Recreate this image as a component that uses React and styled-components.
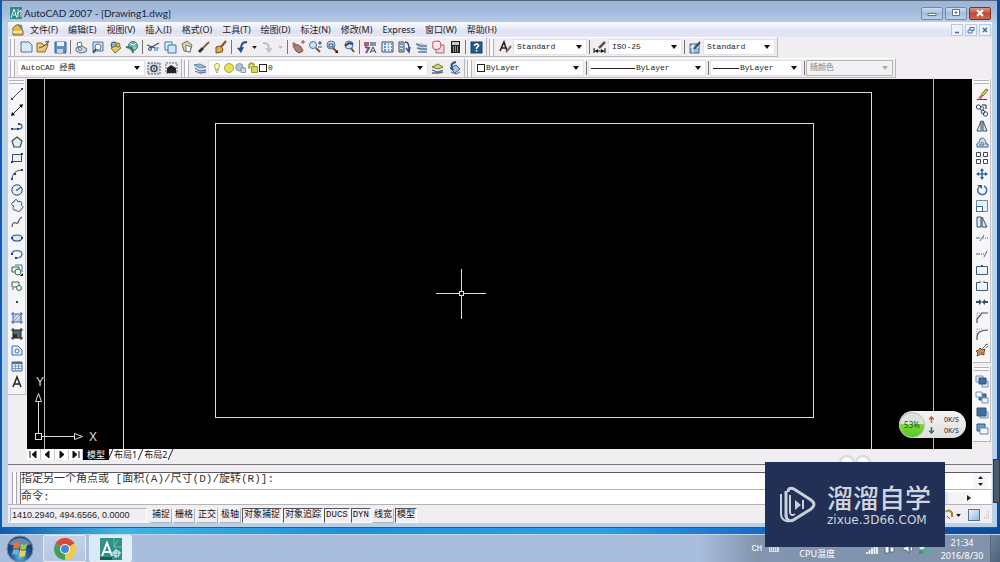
import React from 'react'
import styled, { createGlobalStyle } from 'styled-components'

const ink = '#3a4c66'
const blue = '#3f74ad'
const pale = '#cfe2f3'

// every icon is drawn on a 16 x 16 grid
const icons = {
  new: <path d="M3 3h8l3 3v7H3z" fill="#d9ebf8" stroke="#4d7396" />,
  open: <><path d="M2 4h5l1 2h5l-3 7H2z" fill="#e6c97a" stroke="#8a6d2c" /><path d="M4 9l5-2 4-4M10 3l4-1-2 4" fill="none" stroke="#6c5a34" /></>,
  save: <><path d="M3 3h11v11H3z" fill="#5d93c4" stroke="#3e6589" /><path d="M5 3h7v4H5z" fill="#e8f3fb" /><path d="M5 10h6v4H5z" fill="#c3d6e6" /></>,
  print: <><path d="M4 4l4-1 1 4-4 1z" fill="#fff" stroke="#667386" /><path d="M3 9l6-2 5 3-1 3-6 1-4-2z" fill="#cdd5de" stroke="#667386" /><circle cx="7" cy="10" r="1.500" fill="#fff" stroke="#667386" /></>,
  preview: <><path d="M3 3h10v9H3z" fill={pale} stroke={blue} /><circle cx="8" cy="8" r="3" fill="#fff" stroke="#5d7488" /><path d="M6 10l-3 4" stroke={ink} strokeWidth="2" /></>,
  publish: <><circle cx="7" cy="6" r="3" fill="#8bb2d8" stroke={ink} /><path d="M4 9l7-3 3 3-6 5z" fill="#e0cb5d" stroke="#7b6c2b" /><circle cx="11" cy="6" r="2" fill="#dfc35b" stroke="#77672c" /></>,
  web: <><circle cx="9" cy="7" r="4.500" fill="#6eb5bd" stroke="#3f7386" /><path d="M6 5l4 1 2-2M7 9h5" stroke="#d9f3e0" fill="none" /><path d="M2 8l6 1 1 5" fill="none" stroke="#3b7760" strokeWidth="2" /></>,
  cut: <><path d="M2 6l8 3M14 4L5 9" stroke={ink} strokeWidth="1.300" /><circle cx="5" cy="10" r="1.500" fill="none" stroke={ink} /><path d="M9 9h5M9 11h4" stroke={blue} /></>,
  copy: <><path d="M3 3h7v8H3z" fill="#e6f1fa" stroke={blue} /><path d="M6 6h8v8H6z" fill="#d3e5f4" stroke={blue} /></>,
  paste: <><path d="M3 5l5-3 5 4-2 7-6-1z" fill="#d9d4a7" stroke="#77744f" /><path d="M7 6l5 2-1 5-4-1z" fill="#fff" stroke="#777c80" /></>,
  match: <><path d="M3 13l4-4" stroke="#333" strokeWidth="3" /><path d="M7 9l6-6" stroke="#8a5b3f" strokeWidth="1.800" /></>,
  brush: <><path d="M3 8l4-1 3 3-1 3-6 1z" fill="#dcae4f" stroke="#74502b" /><path d="M8 8l5-6" stroke="#934b38" strokeWidth="2.200" /></>,
  undo: <><path d="M13 3C7 3 7 7 7 12" fill="none" stroke="#234c91" strokeWidth="2" /><path d="M3 9l4 5 3-6z" fill="#234c91" /></>,
  redo: <><path d="M3 4c6 0 6 3 6 8" fill="none" stroke="#bcbcc2" strokeWidth="2" /><path d="M5 9l4 5 4-5z" fill="#c4c4ca" /></>,
  pan: <><path d="M3 7c3-1 4-3 8 1l2 4-4 2-3-2z" fill="#b07f76" stroke="#6b4c4b" /><path d="M4 3v4M2 5h4M11 3h4M13 1v4" stroke="#a44450" /></>,
  zoomRt: <><circle cx="6" cy="6" r="3.500" fill={pale} stroke={blue} /><path d="M9 9l4 4" stroke="#7e4d36" strokeWidth="2" /><path d="M11 4h4M13 2v4M11 8h4" stroke={ink} /></>,
  zoomWin: <><circle cx="7" cy="6" r="4" fill={pale} stroke={blue} /><path d="M5 5h4v3H5z" fill="none" stroke={ink} /><path d="M9 9l4 4" stroke="#7e4d36" strokeWidth="2" /><path d="M11 14h3v-3z" fill="#111" /></>,
  zoomPrev: <><circle cx="8" cy="6" r="4" fill={pale} stroke={blue} /><path d="M10 9l3 4" stroke="#7e4d36" strokeWidth="2" /><path d="M4 7l4-3 4 1" fill="none" stroke="#1f3d70" strokeWidth="2" /></>,
  props: <><path d="M2 3h5v4H2z" fill="#b35c78" /><path d="M8 3h6v4H8z" fill="#7f8fb5" /><path d="M3 8l4 1-3 5" fill="none" stroke="#6a5287" strokeWidth="2" /><path d="M8 14l3-6 3 6M9 12h4" fill="none" stroke={ink} /></>,
  design: <><path d="M3 3h11v10H3z" fill="#e5eff7" stroke={ink} /><path d="M5 5h2M5 8h2M5 11h2M9 5h1M9 8h1M9 11h1M12 5h1M12 8h1M12 11h1" stroke={blue} strokeWidth="1.500" /></>,
  palettes: <><path d="M3 3h5v10H3z" fill={pale} stroke={ink} /><path d="M4 5h3M4 8h3M4 11h3" stroke={ink} /><path d="M9 3c4 0 4 4 4 9M10 9l3 4 1-5" fill="none" stroke="#2c5486" strokeWidth="1.500" /></>,
  sheets: <><path d="M3 4h6l5 2v7H8z" fill="#c6d3df" /><path d="M3 5l5 2h6M4 9l4 1h6M5 13h9" stroke="#58809f" fill="none" strokeWidth="1.600" /></>,
  markup: <><path d="M6 6h8v8H6z" fill="#edd8df" stroke="#9d6c7c" /><path d="M3 3c2-1 2 0 3-1 1 1 3-1 4 1 1 1 0 2 1 3-1 2 0 3-2 4-1 0-2 1-3 0-2 1-3 0-3-2-1-1 0-2 0-3-1-1-1-1 0-2z" fill="#fae6eb" stroke="#c33d59" /></>,
  calc: <><path d="M4 2h9v12H4z" fill="#222" /><path d="M5 3h7v3H5z" fill="#c9c9bd" /><path d="M6 8h1M8 8h1M10 8h1M6 10h1M8 10h1M10 10h1M6 12h1M8 12h1M10 12h1" stroke="#fff" /></>,
  help: <><rect x="3" y="3" width="11" height="11" fill="#1d5a92" stroke="#164067" /><path d="M6.500 7c0-3 5-2 4 0-1 1-2 1-2 3M8.500 11v1.500" stroke="#fff" fill="none" strokeWidth="1.600" /></>,
  textStyle: <><path d="M3 12l4-9 3 9M4 9h5" fill="none" stroke="#222" strokeWidth="1.600" /><path d="M9 13l5-6" stroke="#7e625c" strokeWidth="2" /></>,
  dimStyle: <><path d="M2 9v5M13 9v5M2 12h11" stroke="#111" /><path d="M3 12l3-2v4zM12 12l-3-2v4z" fill="#111" /><path d="M7 9l6-6" stroke="#555" strokeWidth="2.500" /></>,
  tableStyle: <><path d="M3 5h9v9H3z" fill="#9dbfdc" stroke="#355f8e" /><path d="M3 8h9M6 5v9" stroke="#edf5fb" /><path d="M7 10l6-7" stroke="#3d4e60" strokeWidth="2" /></>,
  gear: <><path d="M2 3h12v11H2z" fill="#d6dbe2" stroke="#4b5668" strokeDasharray="2 1" /><circle cx="8" cy="8.500" r="3" fill="none" stroke={ink} strokeWidth="1.500" /><circle cx="8" cy="8.500" r="1" fill={ink} /></>,
  home: <><path d="M3 3h11v10H3z" fill="none" stroke="#5d6570" strokeDasharray="2 1" /><path d="M4 8l4-3 5 3v5H4z" fill="#222" /></>,
  layers: <><path d="M2 5l6-1 6 3-6 1z" fill="#9fbcd9" stroke="#5d81a8" /><path d="M3 8l5 3 6-1M3 11l5 2 6-1" fill="none" stroke="#5d81a8" strokeWidth="1.300" /></>,
  layerCur: <><path d="M3 7l6-3 5 3-5 2z" fill="#d8d66d" stroke="#6d7636" /><path d="M3 10l6 2 5-2M3 13l6 0 5-1" fill="none" stroke="#4f7183" strokeWidth="1.300" /></>,
  layerPrev: <><path d="M4 8l6-3 4 4-5 4z" fill="#a5c4df" stroke="#3e638c" /><path d="M10 2C4 3 5 7 7 10" fill="none" stroke="#2b5488" strokeWidth="2" /><path d="M5 12l5 2 4-2" stroke="#3e638c" fill="none" /></>,
  bulb: <><path d="M8 2c-4 0-4 4-2 6v2h4V8c2-2 2-6-2-6z" fill="#fbf7a5" stroke="#8c8a45" /><path d="M6 12h4M7 14h2" stroke="#666" /></>,
  sun: <circle cx="8" cy="8" r="6" fill="#e7e34d" stroke="#8d8b2d" />,
  freeze: <><circle cx="6" cy="7" r="5" fill="#b6c5d3" stroke="#6a7d92" /><path d="M8 8h6v6H8z" fill="#d6dde4" stroke="#6a7d92" /></>,
  lock: <><path d="M3 9V4c1-3 6-3 6 1" fill="none" stroke="#a9a738" strokeWidth="3" /><path d="M6 6h8v8H6z" fill="#d9d84b" stroke="#7d7b28" /></>,
  line: <><path d="M3 13L13 3" stroke={ink} /><path d="M2 12h2v2H2zM12 2h2v2h-2z" fill="#24436e" /></>,
  xline: <><path d="M3 13L13 3" stroke="#222" /><path d="M2 14l1-4 3 3zM14 2l-1 4-3-3z" fill="#111" /></>,
  pline: <><path d="M3 11h7c4 0 4-5 0-5" fill="none" stroke={blue} strokeWidth="1.300" /><path d="M2 10h2v2H2zM8 10h2v2H8zM9 5h2v2H9z" fill="#24436e" /></>,
  polygon: <path d="M8 3l5 4-2 6H5L3 7z" fill="#e3edf3" stroke="#3d4850" strokeWidth="1.200" />,
  rect: <><path d="M3.500 4.500h9v7h-9z" fill="#e8f1f8" stroke={ink} /><path d="M2 11h2v2H2zM12 3h2v2h-2z" fill="#24436e" /></>,
  arc: <><path d="M3 13c0-5 4-9 10-9" fill="none" stroke={ink} /><path d="M2 12h2v2H2zM5 7h2v2H5zM12 3h2v2h-2z" fill="#24436e" /></>,
  circle: <><circle cx="8" cy="8" r="5.200" fill="#e0eff9" stroke="#2e4664" /><path d="M8 8l4-3M7 8h2" stroke={blue} strokeWidth="1.500" /></>,
  revcloud: <path d="M5 8c-3 0-3-4 0-4 0-3 4-3 4 0 3-2 5 1 3 3 3 1 2 4 0 4 0 3-4 3-5 1-3 1-4-2-2-4z" fill="#eef5fa" stroke={ink} />,
  spline: <path d="M3 13c0-4 2-5 4-4 3 2 2-5 6-6" fill="none" stroke="#5c5360" strokeWidth="1.200" />,
  ellipse: <><ellipse cx="8" cy="8" rx="5" ry="3" fill="#d8eaf7" stroke="#244d7b" strokeWidth="1.200" /><path d="M2 7h2v2H2zM12 7h2v2h-2z" fill="#24436e" /></>,
  ellipseArc: <><path d="M3 8c0-5 10-4 10 0 0 3-3 4-6 4" fill="none" stroke={blue} strokeWidth="1.300" /><path d="M2 7h2v2H2zM6 11h2v2H6z" fill="#24436e" /></>,
  insert: <><path d="M6 3h7v7" fill="none" stroke={blue} /><path d="M3 5h7v5H3z" fill="#e5f1de" stroke="#356653" /><circle cx="9" cy="10" r="3" fill="#eff8e8" stroke="#356653" /><path d="M11 14h3v-3z" fill="#111" /></>,
  block: <><path d="M3 4h7v5H3z" fill="#eff6e9" stroke="#356653" /><circle cx="10" cy="10" r="2.500" fill="#f4faf0" stroke="#356653" /><path d="M4 10v2" stroke="#356653" /></>,
  point: <path d="M7 7h2v2H7z" fill="#24436e" />,
  hatch: <><path d="M4 4h9v8H4z" fill="#c7dcec" /><path d="M4 12l8-8M4 8l4-4M8 12l5-5" stroke="#86a8c4" /><path d="M4 2v12M12 2v12M2 4h12M2 12h12" stroke="#43678f" fill="none" /></>,
  gradient: <><path d="M4 4h8v8H4z" fill="#596672" /><path d="M4 8h4v4H4z" fill="#27313a" /><path d="M4 2v12M12 2v12M2 4h12M2 12h12" stroke="#222" fill="none" /></>,
  region: <><path d="M3 4h6l4 4v5H3z" fill="#dfedf8" stroke="#3e75aa" /><circle cx="8" cy="9" r="2" fill="#fff" stroke="#3e75aa" /></>,
  table: <><path d="M3 4h10v9H3z" fill="#eef5fb" stroke="#41699b" /><path d="M3 5h10" stroke="#41699b" strokeWidth="2" /><path d="M3 8h10M3 10.500h10M6.500 5v8M9.500 5v8" stroke="#7c9dc2" /></>,
  mtext: <path d="M4 13l4-10 4 10M5 10h6" fill="none" stroke="#222" strokeWidth="1.500" />,
  erase: <><path d="M7 9l5-6 2 1-5 6z" fill="#e0d35e" stroke="#736b30" /><path d="M4 12l3-3 2 1-2 3z" fill="#cc6675" /><path d="M3 13.500h10" stroke="#444" /></>,
  copyObj: <><circle cx="4.500" cy="5" r="2.200" fill="none" stroke={ink} /><circle cx="8" cy="6.500" r="1.800" fill="none" stroke={ink} /><circle cx="11.500" cy="12" r="2.200" fill="none" stroke={ink} /><circle cx="9" cy="10" r="1.800" fill="none" stroke={ink} /><path d="M8 3h4v4" fill="none" stroke="#222" /></>,
  mirror: <><path d="M7 3v10H3zM9 3v10h4z" fill="#e4eef6" stroke={ink} /><path d="M8 2v12" stroke="#6d8296" /></>,
  offset: <><path d="M3 13h11v-3h-2c0-3-2-8-6-5-1 2 0 4-3 5z" fill="#cde0ef" stroke="#38658b" /><path d="M5 11h5c0-3-3-4-3-1" fill="none" stroke="#38658b" /></>,
  array: <path d="M2.500 2.500h4v4h-4zM9.500 2.500h4v4h-4zM2.500 9.500h4v4h-4zM9.500 9.500h4v4h-4z" fill="#fff" stroke="#3f4650" />,
  move: <><path d="M8 4v8M4 8h8" stroke={blue} strokeWidth="1.600" /><path d="M8 2l2 3H6zM8 14l2-3H6zM2 8l3-2v4zM14 8l-3-2v4z" fill="#2d5d94" /></>,
  rotate: <><path d="M5 5a4.500 4.500 0 1 0 5-1" fill="none" stroke="#3f6d9c" strokeWidth="1.500" /><path d="M3 3h5v4z" fill="#2d5d94" /></>,
  scale: <><path d="M2.500 2.500h11v11h-11z" fill="#e7f0f7" stroke="#6c89a5" /><path d="M2.500 8.500h6v5h-6z" fill="#fff" stroke="#3e658c" /></>,
  stretch: <><path d="M3 3h4v10H3z" fill="#e1ebf3" stroke={ink} /><path d="M8 3l5 10H8z" fill="#d3e2ee" stroke={ink} /></>,
  trim: <path d="M2 8h4M9 8h1M11 8h1M13 8h1M6 11l4-6" stroke="#4c6674" />,
  extend: <path d="M2 8h4M7 8h1M9 8h1M10 11l3-6" stroke="#4c6674" />,
  breakPt: <><path d="M2.500 4.500h11v8h-11z" fill="#edf3f8" stroke="#42566c" /><path d="M7 3h2v2H7z" fill="#42566c" /></>,
  break: <path d="M6 4.500H2.500v8h11v-8H10M6 3v2M10 3v2" fill="#edf3f8" stroke="#42566c" />,
  join: <path d="M2 7h3V5l3 3-3 3V9H2zM14 7h-3V5L8 8l3 3V9h3z" fill="#2e4d62" />,
  chamfer: <><path d="M3 13V9l5-6h6" fill="none" stroke="#3b5366" strokeWidth="1.200" /><path d="M3 3h5M3 3v6" stroke="#7fa1bd" strokeDasharray="1 1" /></>,
  fillet: <><path d="M3 14v-3c0-5 4-7 11-7" fill="none" stroke="#3b5366" strokeWidth="1.200" /><path d="M3 3h6M3 3v6" stroke="#7fa1bd" strokeDasharray="1 1" /></>,
  explode: <><path d="M2 9l3-1 1-2 2 2 3-1-1 3 0 3-3-1-4 2 1-3z" fill="#e0a950" stroke="#7b412a" /><path d="M4 10h4v2" fill="none" stroke="#c2502f" /><path d="M8 7l4-4M12 6l2-2M11 3l3-1" stroke="#5b6a86" /></>,
  front: <><path d="M2 3h7v6H2zM8 8h6v6H8z" fill="#e1edf7" stroke="#6f94ba" /><path d="M5 5h7v6H5z" fill="#3f6f9f" stroke="#2c557f" /></>,
  back: <><path d="M5 5h7v6H5z" fill="#4a79a9" stroke="#2c557f" /><path d="M2 3h6v5H2zM8 9h6v5H8z" fill="#eff5fa" stroke="#6f94ba" /></>,
  above: <><path d="M6 7h8v6H6z" fill="#dce9f5" stroke="#6f94ba" /><path d="M3 3h9v8H3z" fill="#3f6f9f" stroke="#2c557f" /></>,
  under: <><path d="M3 3h8v7H3z" fill="#6b9bcb" stroke="#2c557f" /><path d="M6 7h8v6H6z" fill="#f0f6fb" stroke="#5d86af" /></>,
}

const Icon = ({ name, size = 16 }) => (
  <svg width={size} height={size} viewBox="0 0 16 16" aria-hidden="true">{icons[name]}</svg>
)

const Tool = ({ name, tall }) => (
  <ToolButton type="button" aria-label={name} $tall={tall}><Icon name={name} /></ToolButton>
)

const Tools = ({ names, tall }) => names.map((name) => <Tool key={name} name={name} tall={tall} />)

const Arrow = ({ color = '#111' }) => (
  <svg width="6" height="4" viewBox="0 0 6 4" aria-hidden="true"><path d="M0 0h6L3 4z" fill={color} /></svg>
)

const Combo = ({ label, value, width, disabled, children }) => (
  <ComboFrame $width={width} $disabled={disabled}>
    {children}
    <ComboSelect aria-label={label} defaultValue={value} disabled={disabled}>
      <option>{value}</option>
    </ComboSelect>
    <Arrow color={disabled ? '#aaa' : '#111'} />
  </ComboFrame>
)

const menus = ['文件(F)', '编辑(E)', '视图(V)', '插入(I)', '格式(O)', '工具(T)', '绘图(D)', '标注(N)', '修改(M)', 'Express', '窗口(W)', '帮助(H)']
const drawTools = ['line', 'xline', 'pline', 'polygon', 'rect', 'arc', 'circle', 'revcloud', 'spline', 'ellipse', 'ellipseArc', 'insert', 'block', 'point', 'hatch', 'gradient', 'region', 'table', 'mtext']
const modifyTools = ['erase', 'copyObj', 'mirror', 'offset', 'array', 'move', 'rotate', 'scale', 'stretch', 'trim', 'extend', 'breakPt', 'break', 'join', 'chamfer', 'fillet', 'explode']
const modes = [
  ['捕捉', false], ['栅格', false], ['正交', false], ['极轴', false], ['对象捕捉', true],
  ['对象追踪', true], ['DUCS', true], ['DYN', true], ['线宽', false], ['模型', true],
]

const TitleBar = () => (
  <Title>
    <svg width="12" height="12" viewBox="0 0 12 12" aria-hidden="true">
      <path d="M0 0h12v12H0z" fill="#2f8a80" /><path d="M1 11l3-9 3 9M3 8h3M8 2v8M7 7l4-4v7" fill="none" stroke="#e6f5ef" />
    </svg>
    <TitleText>AutoCAD 2007 - [Drawing1.dwg]</TitleText>
    <CaptionButton type="button" aria-label="Minimize"><svg width="10" height="8"><path d="M1 4.500h8v2H1z" fill="#fff" stroke="#5b7390" /></svg></CaptionButton>
    <CaptionButton type="button" aria-label="Restore"><svg width="10" height="8"><path d="M1.500.5h7v6h-7z" fill="#fff" stroke="#5b7390" /><path d="M4 3h2v1H4z" fill="#5b7390" stroke="#5b7390" /></svg></CaptionButton>
    <CaptionButton type="button" aria-label="Close" $close><svg width="10" height="8"><path d="M2 1l6 6M8 1L2 7" stroke="#fff" strokeWidth="2" /></svg></CaptionButton>
  </Title>
)

const MenuBar = () => (
  <Menu>
    <svg width="12" height="12" viewBox="0 0 12 12" aria-hidden="true">
      <path d="M1 4l3-3h3l4 6v4H1z" fill="#e3bd43" stroke="#80672c" /><path d="M5 0l5 1 1 6z" fill="#5b83b3" /><path d="M1 8h9" stroke="#f7e9a2" strokeWidth="2" />
    </svg>
    <MenuItems>{menus.map((m) => <MenuButton key={m} type="button">{m}</MenuButton>)}</MenuItems>
    <ChildButton type="button" aria-label="Minimize drawing"><svg width="8" height="8"><path d="M2 6.500h4" stroke="#466c9c" strokeWidth="1.500" /></svg></ChildButton>
    <ChildButton type="button" aria-label="Restore drawing"><svg width="8" height="8"><path d="M1 4h4v3H1zM3 4V1.500h4v3H5" fill="none" stroke="#466c9c" /></svg></ChildButton>
    <ChildButton type="button" aria-label="Close drawing"><svg width="8" height="8"><path d="M2 2l4 4M6 2L2 6" stroke="#466c9c" strokeWidth="1.500" /></svg></ChildButton>
  </Menu>
)

const StandardBar = () => (
  <ToolRow>
    <Toolbar>
      <Grip />
      <Tools names={['new', 'open', 'save']} /><Separator />
      <Tools names={['print', 'preview', 'publish', 'web']} /><Separator />
      <Tools names={['cut', 'copy', 'paste', 'match', 'brush']} /><Separator />
      <Tool name="undo" /><DropButton type="button" aria-label="Undo list"><Arrow /></DropButton>
      <Tool name="redo" /><DropButton type="button" aria-label="Redo list"><Arrow color="#bbb" /></DropButton><Separator />
      <Tools names={['pan', 'zoomRt', 'zoomWin', 'zoomPrev']} /><Separator />
      <Tools names={['props', 'design', 'palettes', 'sheets', 'markup', 'calc']} /><Separator />
      <Tool name="help" />
    </Toolbar>
    <Toolbar>
      <Grip />
      <Tool name="textStyle" /><Combo label="Text style" value="Standard" width={74} /><Separator />
      <Tool name="dimStyle" /><Combo label="Dimension style" value="ISO-25" width={74} /><Separator />
      <Tool name="tableStyle" /><Combo label="Table style" value="Standard" width={72} />
    </Toolbar>
  </ToolRow>
)

const LayerBar = () => (
  <ToolRow>
    <Toolbar>
      <Grip />
      <Combo label="Workspace" value="AutoCAD 经典" width={128} />
      <Tools names={['gear', 'home']} />
    </Toolbar>
    <Toolbar>
      <Grip />
      <Tool name="layers" />
      <Combo label="Layer" value="0" width={220}>
        {['bulb', 'sun', 'freeze', 'lock'].map((n) => <Icon key={n} name={n} size={12} />)}
        <Swatch />
      </Combo>
      <Tools names={['layerCur', 'layerPrev']} />
    </Toolbar>
    <Toolbar>
      <Grip />
      <Combo label="Color" value="ByLayer" width={110}><Swatch /></Combo><Separator />
      <Combo label="Linetype" value="ByLayer" width={118}><LineSample $width={44} /></Combo><Separator />
      <Combo label="Lineweight" value="ByLayer" width={92}><LineSample $width={26} /></Combo><Separator />
      <Combo label="Plot style" value="随颜色" width={87} disabled />
    </Toolbar>
  </ToolRow>
)

const Drawing = () => (
  <DrawingSvg viewBox="0 0 945 370" preserveAspectRatio="xMidYMid meet">
    <g fill="none" stroke="#dcdcdc" shapeRendering="crispEdges">
      <path d="M17.500 0v370M906.500 0v370" stroke="#bdbdbd" />
      <path d="M96.500 370V13.500h748V370" />
      <path d="M188.500 44.500h598v294h-598z" />
      <path d="M434.500 190v22M434.500 217v23M409 214.500h23M437 214.500h22" />
      <path d="M432.500 212.500h4v4h-4z" />
      <path d="M8.500 354.500h6v6h-6zM11.500 354v-32M15 357.500h33" />
    </g>
    <path d="M8.500 322.500h6l-3-8zM47.500 354.500v6l8-3z" fill="none" stroke="#dcdcdc" />
    <text x="9" y="307" fill="#dcdcdc" fontFamily="Liberation Sans, sans-serif" fontSize="12">Y</text>
    <text x="62" y="362" fill="#dcdcdc" fontFamily="Liberation Sans, sans-serif" fontSize="12">X</text>
  </DrawingSvg>
)

const SpeedBall = () => (
  <SpeedWidget>
    <SpeedPercent>53%</SpeedPercent>
    <SpeedLines>
      <SpeedLine><svg width="5" height="7"><path d="M2.500 7V2M0 3.500L2.500 1 5 3.500" fill="none" stroke="#d8572a" strokeWidth="1.500" /></svg>0K/S</SpeedLine>
      <SpeedLine><svg width="5" height="7"><path d="M2.500 0v5M0 3.500L2.500 6 5 3.500" fill="none" stroke="#2e7a34" strokeWidth="1.500" /></svg>0K/S</SpeedLine>
    </SpeedLines>
  </SpeedWidget>
)

const LayoutTabs = () => (
  <TabRow>
    {['M3 2v7M9 2L5 5.500 9 9z', 'M8 2L4 5.500 8 9z', 'M5 2l4 3.500L5 9z', 'M4 2l4 3.500L4 9zM10 2v7'].map((d) => (
      <TabNav key={d} type="button" aria-label="Scroll tabs"><svg width="13" height="11"><path d={d} fill="#111" stroke="#111" /></svg></TabNav>
    ))}
    <Tab type="button" $active>模型</Tab>
    <Slash />
    <Tab type="button">布局1</Tab>
    <Slash />
    <Tab type="button">布局2</Tab>
    <Slash />
  </TabRow>
)

const CommandLine = () => (
  <CommandDock>
    <DockGrip />
    <CommandBox>
      <HistoryRow>
        <HistoryText>指定另一个角点或 [面积(A)/尺寸(D)/旋转(R)]:</HistoryText>
        <Spinner type="button" aria-label="Scroll history"><svg width="7" height="12"><path d="M1 4l2.500-3L6 4zM1 8l2.500 3L6 8z" fill="#222" /></svg></Spinner>
      </HistoryRow>
      <PromptRow>
        <label htmlFor="cmd">命令:</label>
        <PromptInput id="cmd" type="text" />
        <PromptScroll type="button" aria-label="Scroll right"><svg width="4" height="6"><path d="M0 0l4 3-4 3z" fill="#222" /></svg></PromptScroll>
      </PromptRow>
    </CommandBox>
  </CommandDock>
)

const StatusBar = () => (
  <Status>
    <Coords>1410.2940, 494.6566, 0.0000</Coords>
    <Modes>{modes.map(([text, on]) => <ModeButton key={text} type="button" aria-pressed={on} $on={on}>{text}</ModeButton>)}</Modes>
    <svg width="9" height="12" viewBox="0 0 9 12" aria-hidden="true"><path d="M1 3c2-3 5-1 6 1v4" fill="none" stroke="#a8862c" strokeWidth="2" /><path d="M2 7l3 3" stroke="#555" /></svg>
    <DropButton type="button" aria-label="Status menu"><Arrow /></DropButton>
    <CleanButton type="button" aria-label="Clean screen" />
    <svg width="8" height="8" aria-hidden="true"><path d="M6 1h1M4 4h1M6 4h1M2 7h1M4 7h1M6 7h1" stroke="#a5a5ad" /></svg>
  </Status>
)

const Watermark = () => (
  <WatermarkBox>
    <svg width="36" height="38" viewBox="0 0 36 38" aria-hidden="true">
      <path d="M8 6c0-3 2-5 6-3l17 11c4 3 4 6 0 9L15 33c-4 3-9 2-9-4" fill="none" stroke="#c9ced9" strokeWidth="3" />
      <path d="M1 8v20c0 5 4 8 9 7" fill="none" stroke="#c9ced9" strokeWidth="2" />
      <path d="M6 5v25" stroke="#c9ced9" strokeWidth="3" />
      <path d="M10 9v17c0 3 2 4 5 2" fill="none" stroke="#c9ced9" strokeWidth="2" />
      <path d="M15 14l6 5-6 5zM22 14h2v9h-2z" fill="#c9ced9" />
    </svg>
    <div>
      <WatermarkName>溜溜自学</WatermarkName>
      <WatermarkSite>zixue.3D66.COM</WatermarkSite>
    </div>
  </WatermarkBox>
)

const Taskbar = () => (
  <TaskbarRow>
    <StartButton type="button" aria-label="Start">
      <svg width="28" height="28" viewBox="0 0 28 28">
        <defs><radialGradient id="orb" cx="50%" cy="80%"><stop offset="0" stopColor="#5fc3e8" /><stop offset=".6" stopColor="#285f92" /><stop offset="1" stopColor="#1d4370" /></radialGradient></defs>
        <circle cx="14" cy="14" r="13" fill="url(#orb)" stroke="#6f8fb5" />
        <path d="M3 9c5-8 17-8 22 0-6 3-16 3-22 0z" fill="#b8cfe3" opacity=".5" />
        <path d="M8 8c2-1 4-1 6 0l-1 6c-2-1-4-1-6 0z" fill="#e8703a" />
        <path d="M15 9c2 1 4 1 6 0l-1 5c-2 1-4 1-6 0z" fill="#9bcc52" />
        <path d="M7 15c2-1 4-1 6 0l-1 5c-2-1-4-1-6 0z" fill="#63b3e8" />
        <path d="M14 15c2 1 4 1 6 0l-1 6c-2 1-4 1-6 0z" fill="#f4cf50" />
      </svg>
    </StartButton>
    <TaskButton type="button" aria-label="Chrome">
      <svg width="22" height="22" viewBox="0 0 22 22">
        <path d="M11 11L1.500 5.500A11 11 0 0 1 20.500 5.500z" fill="#d8473a" />
        <path d="M11 11L20.500 5.500A11 11 0 0 1 11 22z" fill="#f2cb43" />
        <path d="M11 11v11A11 11 0 0 1 1.500 5.500z" fill="#3fa158" />
        <circle cx="11" cy="11" r="5" fill="#fff" /><circle cx="11" cy="11" r="4" fill="#4a86d8" />
      </svg>
    </TaskButton>
    <TaskButton type="button" aria-label="AutoCAD" $active>
      <svg width="22" height="22" viewBox="0 0 22 22">
        <path d="M0 0h22v22H0z" fill="#2f9288" /><path d="M14 0v9M18 2l-4 7h8" fill="none" stroke="#6fbcb0" />
        <path d="M2 18L7 5l5 13M4 14h6" fill="none" stroke="#fff" strokeWidth="2" /><path d="M12 15h9M16 11v9M14 13h5v5h-5z" fill="none" stroke="#e8f7f3" />
        <path d="M0 19h12v3H0z" fill="#1b5d5b" />
      </svg>
    </TaskButton>
    <Tray>
      <TrayLang>CH</TrayLang>
      <svg width="10" height="8" aria-hidden="true"><path d="M0 1h10v6H0z" fill="#d6dde5" /><path d="M1 3h8M1 5h8" stroke="#6d7b8d" strokeDasharray="1 1" /></svg>
      <TrayLabel>CPU温度</TrayLabel>
      <TrayIcons>
        <svg width="80" height="12" viewBox="0 0 80 12" aria-hidden="true">
          <path d="M0 4h6L3 1z" fill="#fff" />
          <path d="M17 9v2M19.500 7v4M22 5v6M24.500 3v8M27 1v10" stroke="#fff" strokeWidth="1.600" />
          <path d="M35 2h4v8h-4zM40 4h4v5h-4z" fill="#fff" stroke="#5c6b7d" />
          <path d="M53 4h3l3-3v9l-3-3h-3zM61 3c2 2 2 4 0 6" fill="#fff" stroke="#5c6b7d" />
          <circle cx="72" cy="4" r="2.500" fill="#dfe9ee" /><path d="M69 7h6v4h-6z" fill="#4b8e79" /><circle cx="76" cy="8" r="2.500" fill="none" stroke="#4fb795" strokeWidth="1.500" />
        </svg>
      </TrayIcons>
      <Clock><span>21:34</span><span>2016/8/30</span></Clock>
      <ShowDesktop type="button" aria-label="Show desktop" />
    </Tray>
  </TaskbarRow>
)

const App = () => (
  <Desktop>
    <GlobalStyle />
    <Backdrop>
      <AppWindow>
        <TitleBar />
        <Client>
          <MenuBar />
          <StandardBar />
          <LayerBar />
          <Workspace>
            <SideColumn>
              <SideBar><SideGrip /><Tools names={drawTools} tall /></SideBar>
            </SideColumn>
            <Viewport>
              <Canvas><Drawing /><SpeedBall /></Canvas>
              <LayoutTabs />
            </Viewport>
            <SideColumn>
              <SideBar><SideGrip /><Tools names={modifyTools} tall /></SideBar>
              <SideBar><SideGrip /><Tools names={['front', 'back', 'above', 'under']} tall /></SideBar>
            </SideColumn>
          </Workspace>
          <CommandLine />
          <StatusBar />
        </Client>
      </AppWindow>
    </Backdrop>
    <Taskbar />
    <EdgeHandle />
    <Rings width="36" height="16" aria-hidden="true"><circle cx="9" cy="9" r="7" fill="#fafafa" stroke="#d3dad8" strokeWidth="2" /><circle cx="25" cy="9" r="7" fill="#fafafa" stroke="#d3dad8" strokeWidth="2" /></Rings>
    <Watermark />
  </Desktop>
)

const GlobalStyle = createGlobalStyle`
  * {
    box-sizing: border-box;
  }
  body {
    margin: 0;
    overflow: hidden;
    font-family: 'Noto Sans', 'Noto Sans CJK SC', sans-serif;
    font-size: 9px;
    color: #222;
  }
  button, select, input {
    margin: 0;
    padding: 0;
    border: 0;
    border-radius: 0;
    background: none;
    font: inherit;
    color: inherit;
  }
  svg {
    display: block;
    flex: none;
  }
`

const Desktop = styled.div`
  position: relative;
  display: flex;
  flex-direction: column;
  height: 100vh;
`

const Backdrop = styled.div`
  display: flex;
  flex: 1;
  min-height: 0;
  padding: 0 3px 6px 2px;
  background: linear-gradient(90deg, #0d5bb0, #3fb4e6 12%, #1f8fdc 35%, #2aa0ea 60%, #0f5fc0 80%, #0a4a9a);
`

const AppWindow = styled.div`
  display: flex;
  flex: 1;
  flex-direction: column;
  min-width: 0;
  padding: 0 5px 4px 6px;
  border-top: 1px solid #56677c;
  border-bottom: 1px solid #33597f;
  background: #bad0e9;
`

const Title = styled.header`
  display: flex;
  align-items: center;
  flex: none;
  gap: 2px;
  height: 21px;
  margin: 0 -5px 0 -6px;
  padding: 3px 6px 0 8px;
  background: linear-gradient(#9fb5d4, #a3bbdc 50%, #b5cbe6);
`

const TitleText = styled.span`
  flex: 1;
  font-family: Lato, sans-serif;
  font-size: 10px;
  line-height: 14px;
  color: #1b2430;
`

const CaptionButton = styled.button`
  display: flex;
  align-items: center;
  justify-content: center;
  width: 22px;
  height: 13px;
  border: 1px solid ${(props) => (props.$close ? '#74332f' : '#7089a8')};
  border-radius: 2px;
  background: ${(props) => (props.$close ? 'linear-gradient(#dd9684, #c04a34 50%, #cf6a4c)' : 'linear-gradient(#cbdcf0, #a6bedc 50%, #bdd2ea)')};
`

const Client = styled.div`
  display: flex;
  flex: 1;
  flex-direction: column;
  min-height: 0;
  background: #f0eef1;
`

const Menu = styled.nav`
  display: flex;
  align-items: center;
  flex: none;
  gap: 2px;
  height: 15px;
  padding: 0 1px 0 4px;
  background: linear-gradient(#fafbfe, #dfe2f3 60%, #e4e6f5);
`

const MenuItems = styled.div`
  display: flex;
  flex: 1;
  gap: 10px;
  padding-left: 4px;
`

const MenuButton = styled.button`
  line-height: 14px;
  color: #1d1d26;
`

const ChildButton = styled.button`
  display: flex;
  align-items: center;
  justify-content: center;
  width: 12px;
  height: 12px;
  border: 1px solid #b9c9de;
  background: #eef3fb;
`

const ToolRow = styled.div`
  display: flex;
  flex: none;
  height: 21px;
`

const Toolbar = styled.div`
  display: flex;
  align-items: center;
  height: 20px;
  padding-right: 2px;
  border-right: 1px solid #b9b7bc;
  border-bottom: 1px solid #b9b7bc;
  border-top: 1px solid #fff;
`

const Grip = styled.span`
  width: 5px;
  height: 17px;
  margin: 0 2px;
  border: solid #b4b2b8;
  border-width: 0 1px;
  background: #fafafa;
`

const Separator = styled.span`
  width: 1px;
  height: 14px;
  margin: 0 1px 0 2px;
  background: #77757c;
`

const ToolButton = styled.button`
  display: flex;
  align-items: center;
  justify-content: center;
  flex: none;
  width: 17px;
  height: ${(props) => (props.$tall ? 16 : 17)}px;
`

const DropButton = styled.button`
  display: flex;
  align-items: center;
  justify-content: center;
  width: 9px;
  height: 17px;

  svg {
    width: 5px;
    height: 3px;
  }
`

const ComboFrame = styled.div`
  display: flex;
  align-items: center;
  width: ${(props) => props.$width}px;
  height: 16px;
  padding: 0 4px 0 2px;
  border: 1px solid ${(props) => (props.$disabled ? '#b5b5b8' : '#e2e2e6')};
  background: ${(props) => (props.$disabled ? '#f2f1f3' : '#fff')};
  color: ${(props) => (props.$disabled ? '#85858a' : '#1a1a1a')};
`

const ComboSelect = styled.select`
  flex: 1;
  min-width: 0;
  padding-left: 1px;
  appearance: none;
  outline: none;
  font-family: 'Liberation Mono', 'Noto Sans CJK SC', monospace;
  font-size: 8px;
  line-height: 12px;
  opacity: 1;
`

const Swatch = styled.span`
  width: 8px;
  height: 8px;
  border: 1px solid #222;
  background: #fff;
`

const LineSample = styled.span`
  width: ${(props) => props.$width}px;
  height: 1px;
  background: #222;
`

const Workspace = styled.main`
  display: flex;
  flex: 1;
  min-height: 0;
  padding-bottom: 4px;
  border-bottom: 1px solid #77757a;
`

const SideColumn = styled.div`
  display: flex;
  flex-direction: column;
  gap: 3px;
  width: 19px;
  flex: none;
`

const SideBar = styled.div`
  display: flex;
  flex-direction: column;
  flex: none;
  width: 18px;
  padding-bottom: 4px;
  border-right: 1px solid #c2c0c5;
  border-bottom: 1px solid #b9b7bc;
  background: #f6f5f8;
`

const SideGrip = styled.span`
  height: 4px;
  margin: 1px 1px 2px;
  border: solid #b4b2b8;
  border-width: 1px 0;
  background: #fafafa;
`

const Viewport = styled.section`
  display: flex;
  flex: 1;
  flex-direction: column;
  min-width: 0;
  margin-right: 1px;
`

const Canvas = styled.div`
  position: relative;
  flex: 1;
  min-height: 0;
  background: #000;
`

const DrawingSvg = styled.svg`
  width: 100%;
  height: 100%;
`

const SpeedWidget = styled.div`
  position: absolute;
  right: 6px;
  bottom: 11px;
  display: flex;
  align-items: center;
  gap: 4px;
  width: 67px;
  height: 27px;
  border-radius: 14px;
  background: linear-gradient(#f4f4f4, #dedede);
`

const SpeedPercent = styled.span`
  width: 26px;
  height: 26px;
  border: 1px solid #b5bdb0;
  border-radius: 50%;
  background: linear-gradient(#dfe2dd 45%, #7fdc3d 46%, #56c520);
  font-size: 8px;
  line-height: 24px;
  text-align: center;
  color: #2f4a22;
`

const SpeedLines = styled.div`
  display: flex;
  flex-direction: column;
`

const SpeedLine = styled.div`
  display: flex;
  align-items: center;
  gap: 10px;
  font-size: 7px;
  line-height: 11px;
`

const TabRow = styled.div`
  display: flex;
  flex: none;
  height: 11px;
`

const TabNav = styled.button`
  display: flex;
  width: 14px;
  height: 11px;
  border-right: 1px solid #c9c9cd;
  background: #fff;
`

const Tab = styled.button`
  min-width: ${(props) => (props.$active ? 26 : 24)}px;
  height: 11px;
  padding: 0 2px;
  background: ${(props) => (props.$active ? '#000' : '#fff')};
  color: ${(props) => (props.$active ? '#fff' : '#111')};
  line-height: 10px;
`

const Slash = styled.span`
  width: 1px;
  height: 11px;
  margin: 0 1px;
  background: #222;
  transform: skewX(-24deg);
`

const CommandDock = styled.section`
  display: flex;
  flex: none;
  gap: 3px;
  height: 39px;
  padding: 7px 1px 0 4px;
`

const DockGrip = styled.span`
  width: 5px;
  border: solid #a9a7ad;
  border-width: 0 1px;
  background: #fafafa;
`

const CommandBox = styled.div`
  display: flex;
  flex: 1;
  flex-direction: column;
  min-width: 0;
  border-top: 1px solid #5d5b61;
  border-left: 1px solid #77757a;
  background: #fff;
  font-family: 'Liberation Mono', 'Noto Sans CJK SC', monospace;
  font-size: 11px;
  line-height: 13px;
  color: #333;
`

const HistoryRow = styled.div`
  display: flex;
  height: 17px;
  border-bottom: 1px solid #b4b2b8;
`

const HistoryText = styled.span`
  flex: 1;
`

const Spinner = styled.button`
  display: flex;
  align-items: center;
  justify-content: center;
  width: 15px;
  margin-right: 3px;
  background: #f7f7f9;
`

const PromptRow = styled.div`
  display: flex;
  align-items: center;
  height: 14px;
  padding-top: 1px;
`

const PromptInput = styled.input`
  flex: 1;
  min-width: 0;
  outline: none;
`

const PromptScroll = styled.button`
  display: flex;
  align-items: center;
  justify-content: flex-end;
  width: 200px;
  height: 12px;
  margin-right: 20px;
  background: linear-gradient(90deg, #dfdfe5 88%, #f4f4f6 89%);
`

const Status = styled.footer`
  display: flex;
  align-items: center;
  flex: none;
  height: 19px;
  padding: 2px 2px 0;
  border-top: 1px solid #b4b2b8;
`

const Coords = styled.output`
  width: 137px;
  height: 14px;
  padding-left: 1px;
  border: 1px solid;
  border-color: #b4b2b8 #fff #fff #b4b2b8;
  font-family: 'Liberation Sans', sans-serif;
  line-height: 13px;
`

const Modes = styled.div`
  display: flex;
  flex: 1;
  gap: 1px;
  padding-left: 3px;
`

const ModeButton = styled.button`
  height: 15px;
  padding: 0 1px;
  border: 1px solid;
  border-color: ${(props) => (props.$on ? '#55535a #fff #fff #55535a' : '#f6f6f8 #b4b2b8 #b4b2b8 #f6f6f8')};
  font-family: 'Liberation Mono', 'Noto Sans CJK SC', monospace;
  line-height: 13px;
  color: #111;
`

const CleanButton = styled.button`
  width: 12px;
  height: 12px;
  margin: 0 2px 0 5px;
  border: 1px solid #4f7296;
  background: linear-gradient(135deg, #e8f4fc, #8fb9dc);
`

const TaskbarRow = styled.footer`
  display: flex;
  align-items: center;
  flex: none;
  gap: 3px;
  height: 28px;
  border-top: 1px solid #c5d4e6;
  background: #a9bedd;
`

const StartButton = styled.button`
  width: 40px;
  padding-left: 6px;
`

const TaskButton = styled.button`
  display: flex;
  align-items: center;
  justify-content: center;
  width: 43px;
  height: 27px;
  border: 1px solid #e3ebf5;
  border-radius: 2px;
  background: ${(props) => (props.$active ? 'linear-gradient(90deg, #d9e8f4, #e5eff7)' : 'linear-gradient(#c3d2e6, #b5c7df)')};
`

const Tray = styled.div`
  display: flex;
  align-items: center;
  flex: 1;
  justify-content: flex-end;
  align-self: stretch;
  color: #fff;
  background: linear-gradient(90deg, #a9bedd 65%, #8295ae 72%, #8193ac);
`

const TrayLang = styled.span`
  padding-right: 7px;
  font-family: 'Liberation Mono', monospace;
  line-height: 12px;
`

const TrayLabel = styled.span`
  align-self: flex-end;
  margin-left: 20px;
  line-height: 16px;
`

const TrayIcons = styled.div`
  margin: 0 9px 0 15px;
`

const Clock = styled.time`
  display: flex;
  flex-direction: column;
  align-items: center;
  width: 46px;
  line-height: 13px;
`

const ShowDesktop = styled.button`
  align-self: stretch;
  width: 10px;
  margin-left: 5px;
  border-left: 1px solid #55657b;
  background: linear-gradient(120deg, #71839b, #4f6079);
`

const EdgeHandle = styled.span`
  position: absolute;
  right: 0;
  bottom: 59px;
  width: 7px;
  height: 44px;
  border: 1px solid #2c3645;
  background: #4d5a6b;
`

const Rings = styled.svg`
  position: absolute;
  right: 126px;
  bottom: 92px;
`

const WatermarkBox = styled.div`
  position: absolute;
  right: 55px;
  bottom: 15px;
  display: flex;
  align-items: center;
  gap: 11px;
  width: 180px;
  height: 85px;
  padding-left: 15px;
  background: #223055;
  color: #d0d4de;
`

const WatermarkName = styled.div`
  font-family: 'Noto Sans CJK SC', sans-serif;
  font-size: 26px;
  font-weight: 500;
  line-height: 30px;
`

const WatermarkSite = styled.div`
  font-family: 'DejaVu Sans', sans-serif;
  font-size: 12px;
  line-height: 16px;
`

export default App
